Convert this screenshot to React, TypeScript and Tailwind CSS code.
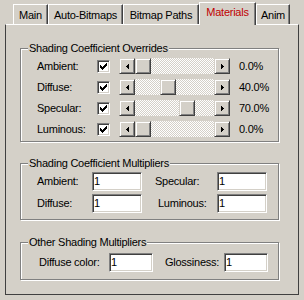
import React from 'react';

const raised =
  'border border-t-[#d4d0c8] border-l-[#d4d0c8] border-r-[#404040] border-b-[#404040] shadow-[inset_1px_1px_0_#fff,inset_-1px_-1px_0_#808080] bg-[#d4d0c8]';
const sunken =
  'border border-t-[#808080] border-l-[#808080] border-r-white border-b-white shadow-[inset_1px_1px_0_#404040,inset_-1px_-1px_0_#d4d0c8] bg-white';

const TABS = [
  { label: 'Main', w: 'w-[35px]' },
  { label: 'Auto-Bitmaps', w: 'w-[75px]' },
  { label: 'Bitmap Paths', w: 'w-[76px]' },
  { label: 'Materials', w: 'w-[57px]', active: true },
  { label: 'Anim', w: 'w-[34px]' },
];

const OVERRIDES = [
  { label: 'Ambient:', value: 0 },
  { label: 'Diffuse:', value: 0.4 },
  { label: 'Specular:', value: 0.7 },
  { label: 'Luminous:', value: 0 },
];

const Arrow: React.FC<{ dir: 'left' | 'right' }> = ({ dir }) => (
  <svg width="3" height="5" viewBox="0 0 3 5" shapeRendering="crispEdges" className={dir === 'right' ? 'scale-x-[-1]' : ''}>
    <path d="M0 2h1v1h-1z M1 1h1v3h-1z M2 0h1v5h-1z" fill="#000" />
  </svg>
);

const Check: React.FC = () => (
  <div className={`${sunken} w-[13px] h-[13px] shrink-0 flex items-center justify-center`}>
    <svg width="7" height="7" viewBox="0 0 7 7" shapeRendering="crispEdges">
      <path
        d="M6 0h1v1h-1z M5 1h2v1h-2z M0 2h1v1h-1z M4 2h3v1h-3z M0 3h2v1h-2z M3 3h3v1h-3z M0 4h5v1h-5z M1 5h3v1h-3z M2 6h1v1h-1z"
        fill="#000"
      />
    </svg>
  </div>
);

const Slider: React.FC<{ value: number }> = ({ value }) => (
  <div className="ml-[9px] flex h-[16px] w-[111px] shrink-0">
    <div className={`${raised} w-[16px] h-[16px] flex items-center justify-center`}>
      <Arrow dir="left" />
    </div>
    <div className="flex-1 bg-[conic-gradient(#fff_25%,#d4d0c8_0_50%,#fff_0_75%,#d4d0c8_0)] bg-[length:2px_2px]">
      <div className={`${raised} w-[16px] h-[16px]`} style={{ marginLeft: Math.round(value * 63) }} />
    </div>
    <div className={`${raised} w-[16px] h-[16px] flex items-center justify-center`}>
      <Arrow dir="right" />
    </div>
  </div>
);

const Edit: React.FC<{ w: string }> = ({ w }) => (
  <div className={`${sunken} ${w} h-[19px] shrink-0 pl-[1px] flex items-center leading-[13px]`}>1</div>
);

const Group: React.FC<{ title: string; className?: string; children: React.ReactNode }> = ({ title, className, children }) => (
  <div className={`ml-[14px] w-[259px] border border-[#808080] shadow-[inset_1px_1px_0_#fff,1px_1px_0_#fff] ${className ?? ''}`}>
    <div className="-mt-[7px] ml-[7px] w-fit bg-[#d4d0c8] px-[1px] leading-[13px]">{title}</div>
    {children}
  </div>
);

export default function App() {
  return (
    <div className="w-[304px] h-[300px] overflow-hidden bg-[#d4d0c8] text-black text-[11px] tracking-[-0.25px] font-['Liberation_Sans',Arial,sans-serif]">
      <div className="flex items-end h-[24px] pl-[13px]">
        {TABS.map(tab =>
          tab.active ? (
            <div
              key={tab.label}
              className={`${tab.w} relative z-10 -mb-px h-[23px] bg-[#d4d0c8] border-t border-l border-r border-t-white border-l-white border-r-[#404040] shadow-[inset_-1px_0_0_#808080] pt-[3px] text-center leading-[13px] text-[#c00000]`}
            >
              {tab.label}
            </div>
          ) : (
            <div
              key={tab.label}
              className={`${tab.w} h-[20px] border-t border-l border-r border-t-white border-l-white border-r-[#404040] shadow-[inset_-1px_0_0_#808080] pt-[4px] text-center leading-[13px]`}
            >
              {tab.label}
            </div>
          )
        )}
      </div>

      <div className="ml-[5px] w-[294px] h-[271px] border border-t-white border-l-[#404040] border-r-[#404040] border-b-[#404040]">
        <Group title="Shading Coefficient Overrides" className="mt-[23px]">
          <div className="mt-[3px] pb-[4px] pl-[16px] flex flex-col gap-[5px]">
            {OVERRIDES.map(row => (
              <div key={row.label} className="flex items-center h-[16px]">
                <span className="w-[60px] shrink-0 leading-[13px]">{row.label}</span>
                <Check />
                <Slider value={row.value} />
                <span className="ml-[9px] leading-[13px]">{(row.value * 100).toFixed(1)}%</span>
              </div>
            ))}
          </div>
        </Group>

        <Group title="Shading Coefficient Multipliers" className="mt-[21px]">
          <div className="mt-[2px] pb-[6px] pl-[16px] flex flex-col gap-[3px]">
            <div className="flex items-center">
              <span className="w-[55px] shrink-0">Ambient:</span>
              <Edit w="w-[50px]" />
              <span className="ml-[13px] w-[62px] shrink-0">Specular:</span>
              <Edit w="w-[50px]" />
            </div>
            <div className="flex items-center">
              <span className="w-[55px] shrink-0">Diffuse:</span>
              <Edit w="w-[50px]" />
              <span className="ml-[13px] w-[62px] shrink-0 pl-[3px]">Luminous:</span>
              <Edit w="w-[50px]" />
            </div>
          </div>
        </Group>

        <Group title="Other Shading Multipliers" className="mt-[22px]">
          <div className="mt-[4px] pb-[7px] pl-[18px] flex items-center">
            <span className="w-[70px] shrink-0">Diffuse color:</span>
            <Edit w="w-[44px]" />
            <span className="ml-[12px] w-[59px] shrink-0">Glossiness:</span>
            <Edit w="w-[44px]" />
          </div>
        </Group>
      </div>
    </div>
  );
}
